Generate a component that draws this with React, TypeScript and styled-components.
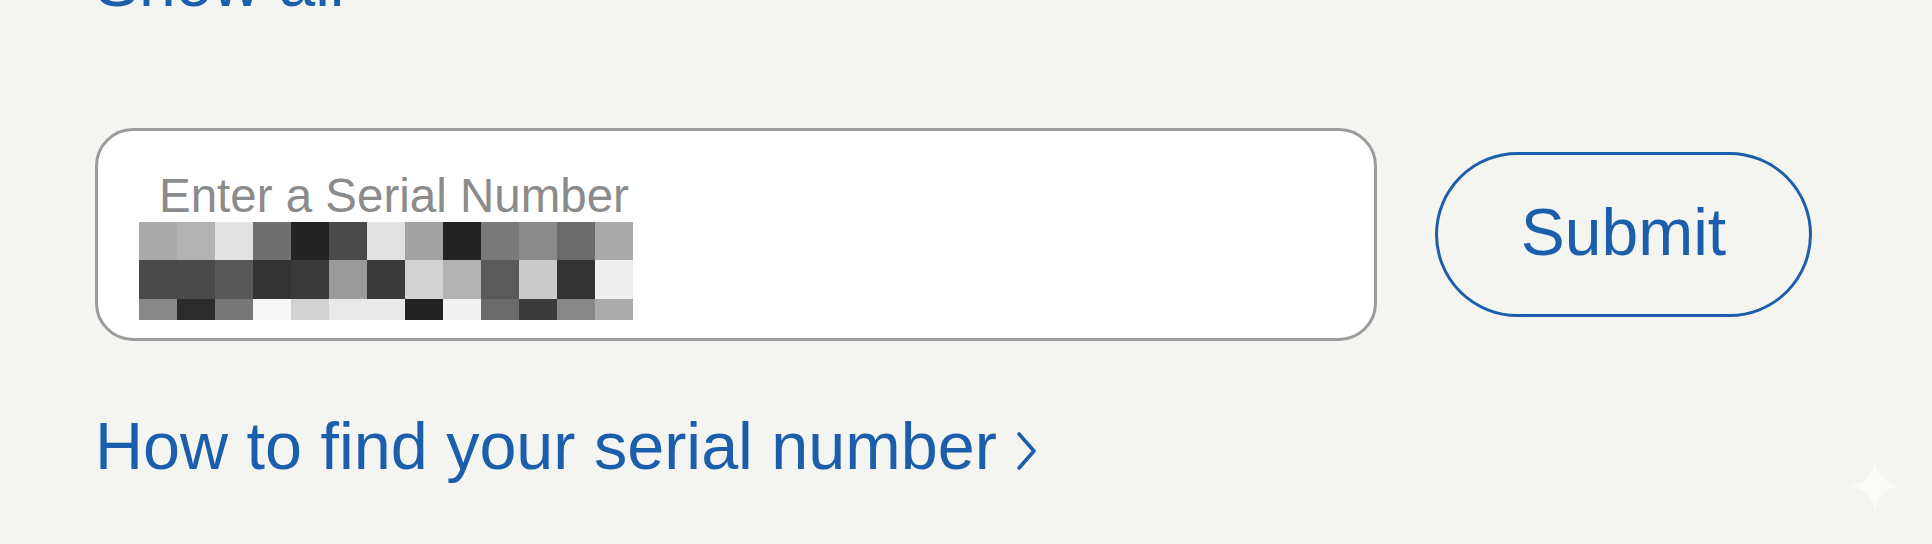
import React from 'react'
import styled, { createGlobalStyle } from 'styled-components'

const Blue = '#1b5eac'

const GlobalStyle = createGlobalStyle`
  html, body {
    margin: 0;
    padding: 0;
    background: #f4f4f0;
    font-family: "Liberation Sans", Arial, sans-serif;
    overflow: hidden;
  }
`

const Page = styled.div`
  position: relative;
  width: 1932px;
  height: 544px;
  padding-left: 95px;
  box-sizing: border-box;
  display: flex;
  flex-direction: column;
  align-items: flex-start;
`

const ShowAll = styled.a`
  display: block;
  margin-top: -50px;
  font-size: 66px;
  line-height: 66px;
  color: ${Blue};
  text-decoration: none;
`

const FormRow = styled.div`
  margin-top: 112px;
  display: flex;
  align-items: center;
  gap: 58px;
`

const SerialBox = styled.div`
  width: 1282px;
  height: 213px;
  box-sizing: border-box;
  border: 3px solid #9b9b9b;
  border-radius: 38px;
  background: #ffffff;
  padding: 41px 0 0 41px;
`

const Placeholder = styled.div`
  margin-left: 20px;
  font-size: 47.5px;
  line-height: 48px;
  color: #8b8b8b;
`

const Pixels = styled.div`
  margin-top: 2px;
  display: grid;
  grid-template-columns: repeat(13, 38px);
  grid-template-rows: 38px 39px 21px;
`

const Cell = styled.div<{ $shade: string }>`
  background: ${({ $shade }) => $shade};
`

const SubmitButton = styled.button`
  width: 377px;
  height: 165px;
  box-sizing: border-box;
  border: 3px solid ${Blue};
  border-radius: 83px;
  background: transparent;
  color: ${Blue};
  font-family: inherit;
  font-size: 66px;
  padding: 0 0 6px;
  cursor: pointer;
`

const HelpLink = styled.a`
  margin-top: 72px;
  display: flex;
  align-items: flex-end;
  font-size: 66.5px;
  line-height: 66px;
  color: ${Blue};
  text-decoration: none;
`

const Chevron = styled.svg`
  width: 24px;
  height: 40px;
  margin: 0 0 8px 18px;
`

const Sparkle = styled.svg`
  position: absolute;
  right: 32px;
  bottom: 33px;
  width: 50px;
  height: 50px;
`

// redacted serial, 3 rows x 13 cols
const shades = [
  ['#a9a9a9', '#b2b2b2', '#e2e2e2', '#707070', '#232323', '#4a4a4a', '#e2e2e2', '#a2a2a2', '#232323', '#7a7a7a', '#8b8b8b', '#6b6b6b', '#a9a9a9'],
  ['#4a4a4a', '#4a4a4a', '#565656', '#333333', '#3a3a3a', '#9a9a9a', '#3a3a3a', '#d2d2d2', '#b2b2b2', '#5a5a5a', '#cacaca', '#333333', '#efefef'],
  ['#888888', '#2b2b2b', '#777777', '#f6f6f6', '#d2d2d2', '#e9e9e9', '#e9e9e9', '#232323', '#f1f1f1', '#6b6b6b', '#3b3b3b', '#888888', '#ababab'],
]

export default function App() {
  return (
    <>
      <GlobalStyle />
      <Page>
        <ShowAll href='#'>Show all</ShowAll>
        <FormRow>
          <SerialBox>
            <Placeholder>Enter a Serial Number</Placeholder>
            <Pixels>
              {shades.flat().map((shade, i) => (
                <Cell key={`px-${i}`} $shade={shade} />
              ))}
            </Pixels>
          </SerialBox>
          <SubmitButton>Submit</SubmitButton>
        </FormRow>
        <HelpLink href='#'>
          How to find your serial number
          <Chevron viewBox='0 0 24 40'>
            <polyline
              points='4,3 19,20 4,37'
              fill='none'
              stroke={Blue}
              strokeWidth='3.6'
              strokeLinecap='round'
              strokeLinejoin='round'
            />
          </Chevron>
        </HelpLink>
        <Sparkle viewBox='0 0 50 50'>
          <path
            d='M25 0 C27 14 36 23 50 25 C36 27 27 36 25 50 C23 36 14 27 0 25 C14 23 23 14 25 0 Z'
            fill='#fbfbf8'
          />
        </Sparkle>
      </Page>
    </>
  )
}
